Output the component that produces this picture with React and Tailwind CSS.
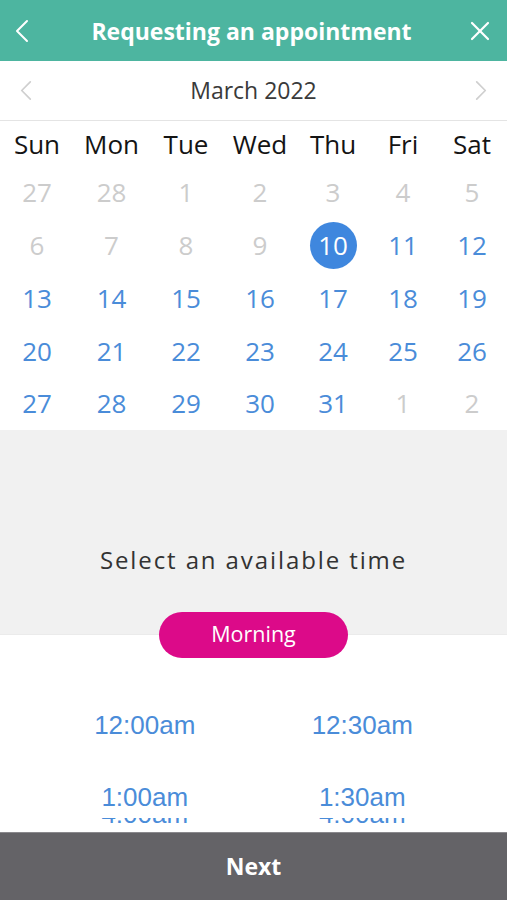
import React from "react";

const cols = "grid grid-cols-[74px_75px_74px_74px_72px_68px_70px]";

const days = ["Sun", "Mon", "Tue", "Wed", "Thu", "Fri", "Sat"];

// [label, muted, selected]
const weeks = [
  [["27", 1], ["28", 1], ["1", 1], ["2", 1], ["3", 1], ["4", 1], ["5", 1]],
  [["6", 1], ["7", 1], ["8", 1], ["9", 1], ["10", 0, 1], ["11"], ["12"]],
  [["13"], ["14"], ["15"], ["16"], ["17"], ["18"], ["19"]],
  [["20"], ["21"], ["22"], ["23"], ["24"], ["25"], ["26"]],
  [["27"], ["28"], ["29"], ["30"], ["31"], ["1", 1], ["2", 1]],
];

const Chevron = ({ dir = "left", className = "" }) => (
  <svg viewBox="0 0 14 24" className={className} fill="none" stroke="currentColor" strokeWidth="2" strokeLinecap="round" strokeLinejoin="round">
    {dir === "left" ? <polyline points="12,2 2,12 12,22" /> : <polyline points="2,2 12,12 2,22" />}
  </svg>
);

const App = () => {
  return (
    <div className="h-[900px] w-[507px] flex flex-col bg-white font-['Open_Sans',sans-serif] overflow-hidden">
      {/* Header */}
      <header className="h-[61px] shrink-0 bg-[#4db5a0] flex items-center justify-between px-[15px] text-white">
        <Chevron className="w-[14px] h-[24px]" />
        <h1 className="text-[23px] font-bold leading-none pt-[1px] pl-[4px]">Requesting an appointment</h1>
        <svg viewBox="0 0 20 20" className="w-[20px] h-[20px] mr-[2px]" stroke="currentColor" strokeWidth="2.2" strokeLinecap="round">
          <line x1="2" y1="2" x2="18" y2="18" />
          <line x1="18" y1="2" x2="2" y2="18" />
        </svg>
      </header>

      {/* Month */}
      <div className="h-[60px] shrink-0 flex items-center justify-between px-[20px] border-b border-[#e4e4e4] text-[#cfcfcf]">
        <Chevron className="w-[12px] h-[21px]" />
        <span className="text-[23px] text-[#3a3a3a] leading-none">March 2022</span>
        <Chevron dir="right" className="w-[12px] h-[21px]" />
      </div>

      {/* Calendar */}
      <div className={`${cols} h-[45px] shrink-0 items-center text-[26px] text-[#141414]`}>
        {days.map((d) => (
          <div key={d} className="text-center leading-none">{d}</div>
        ))}
      </div>
      {weeks.map((w, i) => (
        <div key={i} className={`${cols} h-[52.75px] shrink-0 items-center text-[26px]`}>
          {w.map(([n, muted, sel], j) => (
            <div key={j} className="flex justify-center">
              {sel ? (
                <span className="w-[47px] h-[47px] rounded-full bg-[#3f87de] text-white flex items-center justify-center leading-none">{n}</span>
              ) : (
                <span className={`leading-none ${muted ? "text-[#cccccc]" : "text-[#4a8cd9]"}`}>{n}</span>
              )}
            </div>
          ))}
        </div>
      ))}

      {/* Time picker heading */}
      <div className="h-[205px] shrink-0 bg-[#f1f1f1] border-b border-[#ebebeb] flex flex-col items-center pt-[114px]">
        <p className="text-[24px] tracking-[1.9px] text-[#333333] leading-[32px]">Select an available time</p>
      </div>
      <div className="flex justify-center -mt-[23px] shrink-0">
        <button className="w-[189px] h-[46px] rounded-full bg-[#dc0a89] text-white text-[21.5px] leading-none pb-[2px]">Morning</button>
      </div>

      {/* Times */}
      <div className="flex-1 min-h-0 overflow-hidden px-[36px] pt-[53px] font-['Liberation_Sans',Arial,sans-serif] text-[26px] text-[#4a8cd9]">
        <div className="grid grid-cols-2 gap-y-[44px] text-center leading-[28px]">
          <span>12:00am</span>
          <span>12:30am</span>
          <span>1:00am</span>
          <span>1:30am</span>
        </div>
        <div className="grid grid-cols-2 text-center h-[6px] mt-[7px] overflow-hidden">
          <span className="leading-[28px] -mt-[18px]">4:00am</span>
          <span className="leading-[28px] -mt-[18px]">4:00am</span>
        </div>
      </div>

      {/* Footer */}
      <button className="h-[68px] shrink-0 bg-[#646367] border-t border-[#8a898d] text-white text-[23px] font-bold">Next</button>
    </div>
  );
};

export default App;
